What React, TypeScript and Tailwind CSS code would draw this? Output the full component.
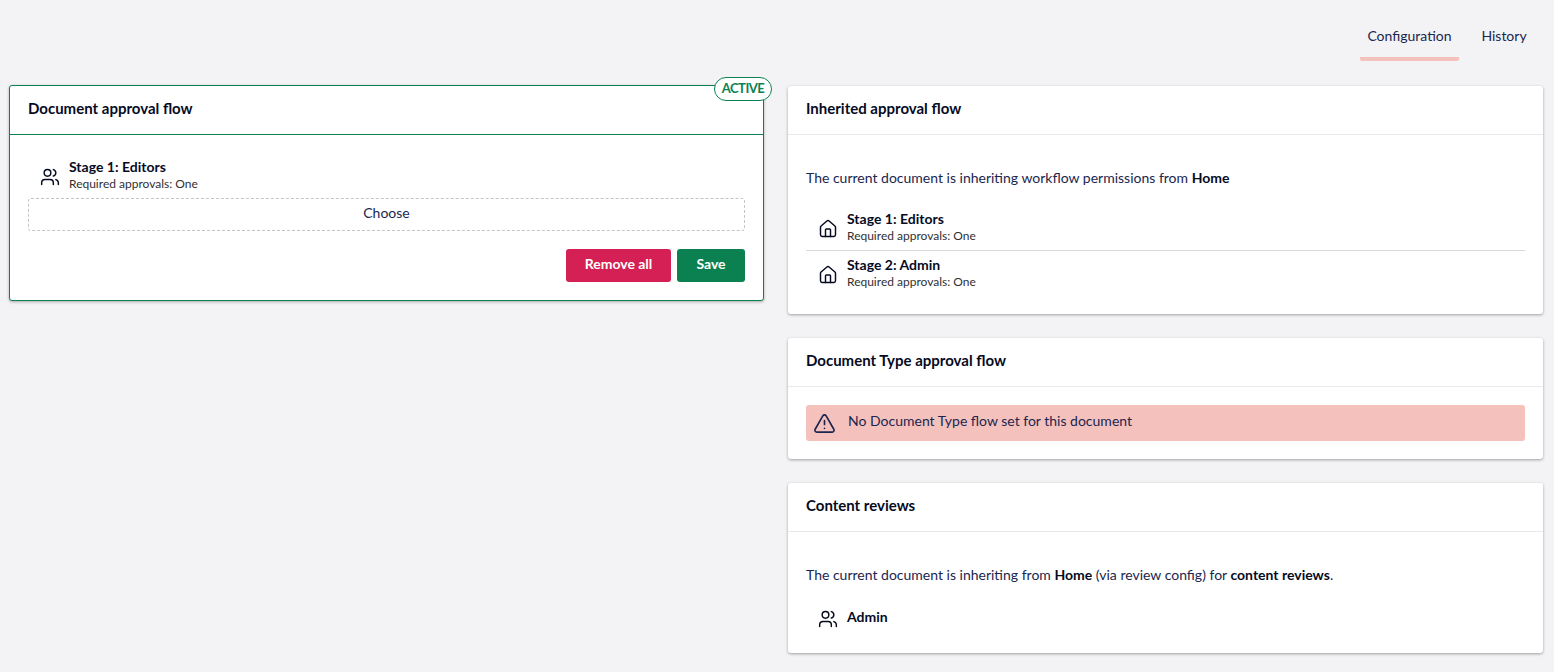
import { Home, TriangleAlert, Users } from "lucide-react";
import type { ReactNode } from "react";

function Card({ title, children }: { title: string; children: ReactNode }) {
    return (
        <div className="bg-white rounded-[3px] shadow-[0_1px_3px_rgba(0,0,0,0.35)]">
            <div className="h-[49px] px-[18px] pb-[4px] flex items-center border-b border-[#e9e9eb] text-[15px] font-bold text-[#060b1f]">{title}</div>
            {children}
        </div>
    );
}

function Stage({ icon, name, sub }: { icon: ReactNode; name: string; sub?: string }) {
    return (
        <div className="flex items-center h-[45px] pl-[12px]">
            <div className="w-[29px] flex items-center shrink-0 text-[#060b1f]">{icon}</div>
            <div className="pb-[2px]">
                <div className="text-[14px] leading-[18px] font-bold text-[#060b1f]">{name}</div>
                {sub && <div className="text-[12px] leading-[15px] text-[#303033]">{sub}</div>}
            </div>
        </div>
    );
}

export default function App() {
    return (
        <div className="w-[1554px] h-[672px] overflow-hidden bg-[#f3f3f5] text-[#1b264f] text-[14px] font-['Lato',sans-serif]">
            <div className="h-[61px] flex justify-end pr-[20px] pt-[14px]">
                <div className="w-[99px] mr-[15px] text-center leading-[44px] h-[47px] border-b-[4px] border-[#f5c1bc] rounded-b-[2px]">Configuration</div>
                <div className="w-[60px] text-center leading-[44px]">History</div>
            </div>

            <div className="grid grid-cols-[755px_755px] gap-x-[24px] pl-[9px] pt-[25px]">
                <div className="relative -mt-px self-start h-[216px] bg-white rounded-[3px] border border-[#0b8152] shadow-[0_1px_3px_rgba(0,0,0,0.3)]">
                    <div className="absolute -top-[9px] -right-[9px] h-[24px] w-[58px] flex items-center justify-center rounded-full border border-[#0b8152] bg-white text-[13px] tracking-[-0.5px] font-bold text-[#0b8152]">ACTIVE</div>
                    <div className="h-[49px] px-[18px] pb-[4px] flex items-center border-b border-[#0b8152] text-[15px] font-bold text-[#060b1f]">Document approval flow</div>
                    <div className="px-[18px] pt-[18px]">
                        <div className="flex items-center h-[45px] pl-[12px]">
                            <Users className="w-[20px] h-[20px] mt-[2px] text-[#060b1f] mr-[9px]" strokeWidth={1.75} />
                            <div className="pb-[3px]">
                                <div className="text-[14px] leading-[18px] font-bold text-[#060b1f]">Stage 1: Editors</div>
                                <div className="text-[12px] leading-[15px] text-[#303033]">Required approvals: One</div>
                            </div>
                        </div>
                        <div className="h-[33px] pb-[5px] flex items-center justify-center border border-dashed border-[#c4c4c4] rounded-[3px]">Choose</div>
                        <div className="flex justify-end gap-[6px] mt-[18px]">
                            <button className="w-[105px] h-[33px] pb-[4px] rounded-[3px] bg-[#d42054] text-white font-bold">Remove all</button>
                            <button className="w-[68px] h-[33px] pb-[4px] rounded-[3px] bg-[#0b8152] text-white font-bold">Save</button>
                        </div>
                    </div>
                </div>

                <div className="flex flex-col gap-[24px]">
                    <Card title="Inherited approval flow">
                        <div className="px-[18px] h-[179px]">
                            <p className="pt-[34px] leading-[18px]">The current document is inheriting workflow permissions from <b className="text-[#060b1f]">Home</b></p>
                            <div className="mt-[17px]">
                                <div className="border-b border-[#d8d8d8] pt-px">
                                    <Stage icon={<Home className="w-[20px] h-[20px] mt-[2px]" strokeWidth={1.75} />} name="Stage 1: Editors" sub="Required approvals: One" />
                                </div>
                                <Stage icon={<Home className="w-[20px] h-[20px] mt-[2px]" strokeWidth={1.75} />} name="Stage 2: Admin" sub="Required approvals: One" />
                            </div>
                        </div>
                    </Card>
                    <Card title="Document Type approval flow">
                        <div className="p-[18px]">
                            <div className="h-[36px] pb-[5px] flex items-center gap-[12px] px-[7px] rounded-[3px] bg-[#f5c1bc]">
                                <TriangleAlert className="w-[23px] h-[23px] mt-[5px]" strokeWidth={1.75} />
                                <span>No Document Type flow set for this document</span>
                            </div>
                        </div>
                    </Card>
                    <Card title="Content reviews">
                        <div className="px-[18px] h-[121px]">
                            <p className="pt-[34px] leading-[18px]">The current document is inheriting from <b className="text-[#060b1f]">Home</b> (via review config) for <b className="text-[#060b1f]">content reviews</b>.</p>
                            <div className="mt-[11px]">
                                <Stage icon={<Users className="w-[20px] h-[20px] mt-[3px]" strokeWidth={1.75} />} name="Admin" />
                            </div>
                        </div>
                    </Card>
                </div>
            </div>
        </div>
    );
}
